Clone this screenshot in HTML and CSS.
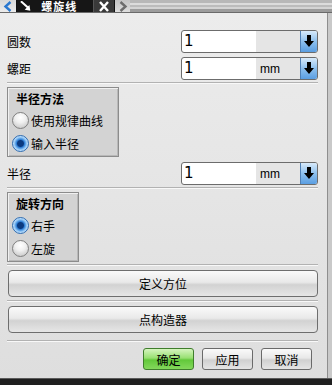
FILE: index.html
```html
<!DOCTYPE html>
<html lang="zh">
<head>
    <meta charset="UTF-8">
    <title>螺旋线</title>
    <link rel="stylesheet" href="styles.css">
</head>
<body>

<!-- タブバー -->
<div class="titlebar">
    <div class="nav nav-left">
        <svg width="10" height="11" viewBox="0 0 10 11"><path d="M7.5 1 L2.5 5.5 L7.5 10" fill="none" stroke="#2a78d0" stroke-width="2.4"/></svg>
    </div>
    <div class="tab">
        <svg class="tab-icon" width="14" height="11" viewBox="0 0 14 11"><path d="M1 0 L9 7" stroke="#fff" stroke-width="2.2"/><path d="M11 10 L5 9 L10 4 Z" fill="#fff"/></svg>
        <span class="tab-title">螺旋线</span>
        <span class="tab-close">
            <svg width="12" height="11" viewBox="0 0 12 11"><path d="M2 1 L10 10 M10 1 L2 10" stroke="#fff" stroke-width="2.4"/></svg>
        </span>
    </div>
    <div class="nav nav-right">
        <svg width="10" height="11" viewBox="0 0 10 11"><path d="M2.5 1 L7.5 5.5 L2.5 10" fill="none" stroke="#6d6d6d" stroke-width="2.4"/></svg>
    </div>
    <div class="stripes"></div>
</div>

<div class="panel">
    <div class="field">
        <span class="label">圆数</span>
        <div class="combo">
            <span class="value">1</span>
            <span class="unit"></span>
            <span class="drop"><svg width="10" height="13" viewBox="0 0 10 13"><path d="M3 0 H7 V6 H10 L5 12 L0 6 H3 Z" fill="#000"/></svg></span>
        </div>
    </div>
    <div class="field">
        <span class="label">螺距</span>
        <div class="combo">
            <span class="value">1</span>
            <span class="unit">mm</span>
            <span class="drop"><svg width="10" height="13" viewBox="0 0 10 13"><path d="M3 0 H7 V6 H10 L5 12 L0 6 H3 Z" fill="#000"/></svg></span>
        </div>
    </div>

    <div class="sep sep-a"></div>

    <div class="group group-wide">
        <div class="group-title">半径方法</div>
        <div class="option"><span class="radio"></span>使用规律曲线</div>
        <div class="option"><span class="radio on"></span>输入半径</div>
    </div>

    <div class="field field-radius">
        <span class="label">半径</span>
        <div class="combo">
            <span class="value">1</span>
            <span class="unit">mm</span>
            <span class="drop"><svg width="10" height="13" viewBox="0 0 10 13"><path d="M3 0 H7 V6 H10 L5 12 L0 6 H3 Z" fill="#000"/></svg></span>
        </div>
    </div>

    <div class="sep sep-b"></div>

    <div class="group group-narrow">
        <div class="group-title">旋转方向</div>
        <div class="option"><span class="radio on"></span>右手</div>
        <div class="option"><span class="radio"></span>左旋</div>
    </div>

    <div class="sep sep-c"></div>
    <button class="wide-btn">定义方位</button>
    <div class="sep sep-d"></div>
    <button class="wide-btn">点构造器</button>
    <div class="sep sep-e"></div>

    <div class="actions">
        <button class="act act-ok">确定</button>
        <button class="act">应用</button>
        <button class="act">取消</button>
    </div>
</div>

<div class="statusbar"></div>

</body>
</html>
```

FILE: styles.css
```css
body {
    margin: 0;
    width: 332px;
    height: 385px;
    overflow: hidden;
    background: #c9c9c9;
    font-family: "Noto Sans CJK SC", "Liberation Sans", sans-serif;
    font-size: 12px;
    color: #000;
}

/* タブバー */
.titlebar {
    display: flex;
    height: 12px;
    background: #161616;
    border-bottom: 1px solid #6a6a6a;
}
.nav {
    width: 16px;
    display: flex;
    align-items: center;
    justify-content: center;
    background: linear-gradient(#d8d8d8, #ececec);
}
.nav-left {
    border-right: 1px solid #111;
}
.nav-right {
    width: 15px;
    border-left: 1px solid #111;
    background: linear-gradient(#c4c4c4, #dedede);
}
.tab {
    width: 97px;
    display: flex;
    align-items: center;
    background: #161616;
}
.tab-icon {
    margin: 0 0 0 3px;
}
.tab-title {
    margin-left: 8px;
    width: 50px;
    color: #fff;
    font-weight: bold;
    font-size: 11px;
    line-height: 12px;
    letter-spacing: 1px;
}
.tab-close {
    width: 21px;
    height: 12px;
    margin-left: 5px;
    display: flex;
    align-items: center;
    justify-content: center;
    background: #3a3a3a;
    border-left: 1px solid #555;
}
.stripes {
    flex: 1;
    background: linear-gradient(#b8b8b8 0 3px, #dcdcdc 3px 5px, #bcbcbc 5px 7px, #d4d4d4 7px 9px, #9c9c9c 9px);
}

/* パネル */
.panel {
    width: 311px;
    height: 365px;
    padding: 0 9px 0 7px;
    background: linear-gradient(#ececec, #dedede);
    border-right: 1px solid #8e8e8e;
    display: flex;
    flex-direction: column;
}
.field {
    display: flex;
    align-items: center;
    justify-content: space-between;
    height: 23px;
    margin-top: 4px;
}
.field:first-child {
    margin-top: 17px;
}
.field-radius {
    margin-top: 5px;
}
.combo {
    width: 135px;
    height: 21px;
    display: flex;
    border: 1px solid #6c6c6c;
    border-radius: 3px;
    overflow: hidden;
    background: #fff;
}
.value {
    flex: 1;
    padding-left: 2px;
    font-family: "DejaVu Sans", sans-serif;
    font-size: 15px;
    line-height: 21px;
}
.unit {
    width: 44px;
    background: #e5e5e5;
    font-family: "Liberation Sans", sans-serif;
    font-size: 12px;
    line-height: 22px;
    padding-left: 4px;
    box-sizing: border-box;
}
.drop {
    width: 16px;
    display: flex;
    align-items: center;
    justify-content: center;
    background: linear-gradient(#d8eafa, #8dc0ee 50%, #5a9ee2);
    border-left: 1px solid #4f7fb4;
}

.sep {
    height: 1px;
    background: #b2b2b2;
    border-bottom: 1px solid #f8f8f8;
}
.sep-a { margin-top: 2px; }
.sep-b { margin-top: 2px; }
.sep-c { margin-top: 2px; }
.sep-d { margin-top: 3px; }
.sep-e { margin-top: 7px; }

/* グループ */
.group {
    background: #d3d3d3;
    border: 1px solid #8c8c8c;
    box-shadow: inset 1px 1px 0 #f0f0f0, inset -1px -1px 0 #b8b8b8;
    height: 68px;
    margin-top: 3px;
}
.group-wide {
    width: 110px;
}
.group-narrow {
    width: 70px;
}
.group-title {
    font-weight: bold;
    padding-left: 8px;
    line-height: 21px;
}
.option {
    display: flex;
    align-items: center;
    height: 23px;
    padding-left: 4px;
}
.radio {
    width: 15px;
    height: 15px;
    margin-right: 2px;
    border-radius: 50%;
    border: 1px solid #808080;
    background: radial-gradient(circle at 50% 30%, #ffffff, #f0f0f0 40%, #bdbdbd);
}
.radio.on {
    border-color: #2d6bb0;
    background: radial-gradient(circle, #0b3a80 0 3px, #2e7fd6 4px, #8ec4f4 6px, #d8ecff 8px);
}

/* ボタン */
.wide-btn {
    margin: 4px 0 0 1px;
    height: 27px;
    font-family: inherit;
    font-size: 12px;
    border: 1px solid #6e6e6e;
    border-radius: 4px;
    background: linear-gradient(#fafafa, #e9e9e9 45%, #d2d2d2 55%, #e6e6e6);
    padding: 0;
}
.actions {
    display: flex;
    justify-content: flex-end;
    gap: 8px;
    margin-top: 6px;
    padding-right: 6px;
}
.act {
    width: 51px;
    height: 22px;
    padding: 0;
    font-family: inherit;
    font-size: 12px;
    border: 1px solid #6a6a6a;
    border-radius: 3px;
    background: linear-gradient(#fafafa, #e8e8e8 45%, #d0d0d0 55%, #e4e4e4);
}
.act-ok {
    border-color: #3f7d2c;
    background: linear-gradient(#d6f5bf, #98e072 45%, #62c83a 55%, #84d85c);
}

.statusbar {
    height: 7px;
    background: #1f1f1f;
    border-top: 1px solid #5a5a5a;
}
```
